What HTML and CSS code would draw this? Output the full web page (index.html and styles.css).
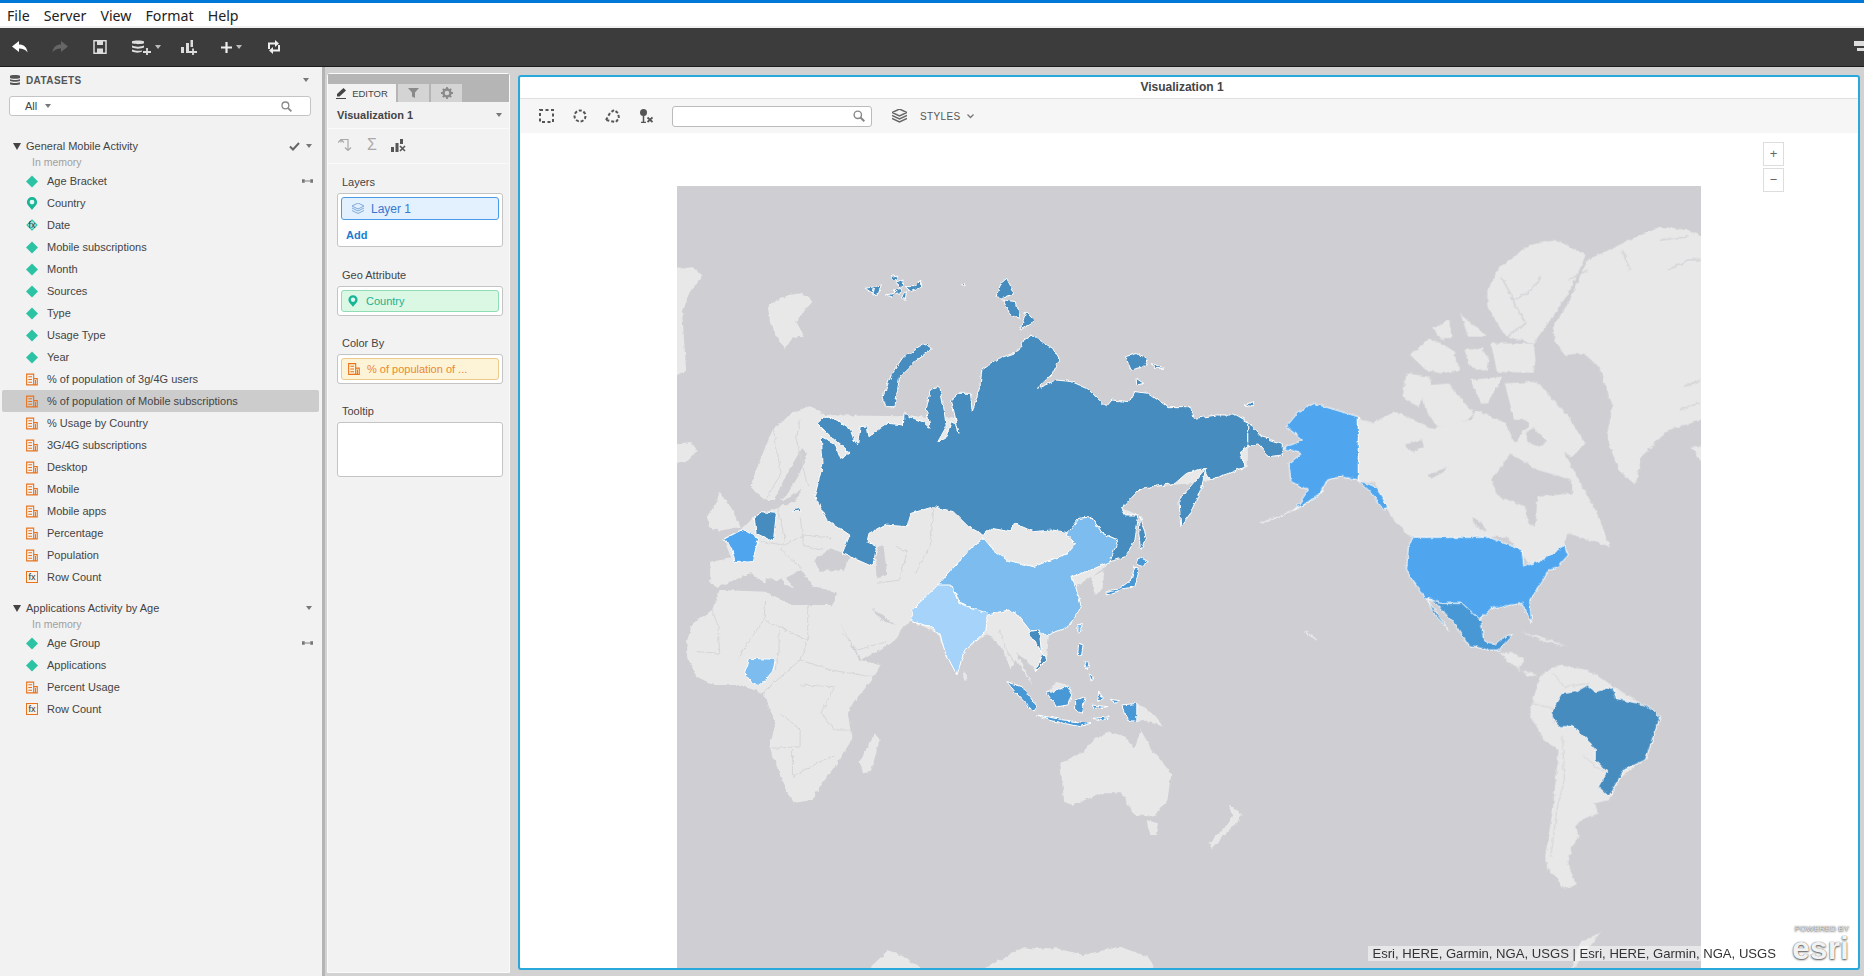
FILE: index.html
```html
<!DOCTYPE html>
<html>
  <head>
    <title>Visualization 1</title>
    <link rel="stylesheet" href="styles.css">
  </head>
  <body>
    <svg class="defs" width="0" height="0">
      <symbol id="i-attr" viewBox="0 0 12 12"><path d="M6 0 12 6 6 12 0 6Z" fill="#2cc3a4"/></symbol>
      <symbol id="i-pin" viewBox="0 0 12 14"><path d="M6 0a5.5 5.5 0 0 1 5.5 5.5C11.500 9 8 11 6 14 4 11 .5 9 .5 5.500A5.500 5.500 0 0 1 6 0Z" fill="#18b596"/><circle cx="6" cy="5.500" r="2.600" fill="#e6f7f2"/></symbol>
      <symbol id="i-measure" viewBox="0 0 13 13"><path d="M.7.7h7.600v11.600H.7ZM8.300 5.500h3.900v6.800H8.300ZM2.500 3.500h4M2.500 6.500h4M2.500 9.500h4M10.200 7v5" fill="none" stroke="#e8731c" stroke-width="1.200"/></symbol>
      <symbol id="i-link" viewBox="0 0 12 6"><path d="M0 1h3v4H0ZM9 1h3v4H9Z" fill="#777"/><path d="M3 3h6" stroke="#777"/></symbol>
      <symbol id="i-search" viewBox="0 0 12 12"><circle cx="4.800" cy="4.800" r="3.700" fill="none" stroke="#888" stroke-width="1.400"/><path d="M7.500 7.500 11.300 11.300" stroke="#888" stroke-width="2"/></symbol>
      <filter id="rough" filterUnits="userSpaceOnUse" x="667" y="176" width="1044" height="802">
        <feTurbulence type="fractalNoise" baseFrequency=".2" numOctaves="2" seed="4"/>
        <feDisplacementMap in="SourceGraphic" scale="4" xChannelSelector="R" yChannelSelector="G"/>
      </filter>
    </svg>

    <div class="menu-bar">
      <span>File</span>
      <span>Server</span>
      <span>View</span>
      <span>Format</span>
      <span>Help</span>
    </div>

    <div class="tool-bar">
      <svg width="16" height="12" viewBox="0 0 16 12"><path d="M7 0 0 5.500 7 11V7.500c4 0 6.500 1 8.500 4C15 6 11.500 3.500 7 3.500Z" fill="#fff"/></svg>
      <svg width="16" height="12" viewBox="0 0 16 12"><path d="M9 0 16 5.500 9 11V7.500c-4 0-6.500 1-8.500 4C1 6 4.500 3.500 9 3.500Z" fill="#666"/></svg>
      <svg width="16" height="14" viewBox="0 0 16 14"><path d="M2 .8h12v12.400H2Z" fill="none" stroke="#ddd" stroke-width="1.500"/><path d="M5 1h6v4H5ZM5 8.500h6V13H5Z" fill="#ddd"/></svg>
      <span class="tool-group">
        <svg width="19" height="15" viewBox="0 0 19 15"><path d="M0 1.500C0 0 12 0 12 1.500V3C12 4.500 0 4.500 0 3ZM0 5.500C3 7 9 7 12 5.500V7.500C9 9 3 9 0 7.500ZM0 9.500C3 11 8 11 10 10.500V11.500C8 13 3 13 0 11.500Z" fill="#ddd"/><path d="M11 12h8M15 8v7" stroke="#ddd" stroke-width="1.800"/></svg>
        <i class="caret caret-light"></i>
      </span>
      <svg class="tool-tight" width="16" height="15" viewBox="0 0 16 15"><path d="M0 7h3v6H0ZM5 3h3v10H5ZM9.500 0h2.500v7H9.500Z" fill="#ddd"/><path d="M8 12h8M12 8.500v6.500" stroke="#ddd" stroke-width="1.800"/></svg>
      <span class="tool-group">
        <svg width="11" height="11" viewBox="0 0 11 11"><path d="M0 5.500h11M5.500 0v11" stroke="#eee" stroke-width="2.200"/></svg>
        <i class="caret caret-light"></i>
      </span>
      <svg width="16" height="14" viewBox="0 0 16 14"><path d="M3 9V3.500h7M13 5v5.500H6" fill="none" stroke="#eee" stroke-width="2"/><path d="M9 0l4 3.500L9 7ZM7 7l-4 3.500L7 14Z" fill="#eee"/></svg>
      <svg class="tool-end" width="10" height="12" viewBox="0 0 10 12"><path d="M0 0h10v5H0ZM3 7h7v3H3Z" fill="#ddd"/></svg>
    </div>

    <div class="main">
      <div class="data-panel">
        <div class="data-head">
          <svg width="10" height="10" viewBox="0 0 10 10"><path d="M0 1C0-.3 10-.3 10 1V3C10 4 0 4 0 3ZM0 4.300C2 5.300 8 5.300 10 4.300V6C8 7 2 7 0 6ZM0 7.300C2 8.300 8 8.300 10 7.300V9C10 10.300 0 10.300 0 9Z" fill="#555"/></svg>
          <span class="data-title">DATASETS</span>
          <i class="caret caret-end"></i>
        </div>
        <div class="search-box">
          <span>All</span>
          <i class="caret"></i>
          <svg class="search-icon" width="11" height="11"><use href="#i-search"/></svg>
        </div>

        <div class="group-head">
          <i class="caret-down"></i>
          <span>General Mobile Activity</span>
          <svg class="check" width="11" height="9" viewBox="0 0 11 9"><path d="M1 4.500 4 7.500 10 1" fill="none" stroke="#666" stroke-width="2"/></svg>
          <i class="caret"></i>
        </div>
        <div class="group-note">In memory</div>
        <div class="row"><svg class="ico"><use href="#i-attr"/></svg>Age Bracket<svg class="link" width="11" height="6"><use href="#i-link"/></svg></div>
        <div class="row"><svg class="ico"><use href="#i-pin"/></svg>Country</div>
        <div class="row"><span class="fx-attr"><b>fx</b></span>Date</div>
        <div class="row"><svg class="ico"><use href="#i-attr"/></svg>Mobile subscriptions</div>
        <div class="row"><svg class="ico"><use href="#i-attr"/></svg>Month</div>
        <div class="row"><svg class="ico"><use href="#i-attr"/></svg>Sources</div>
        <div class="row"><svg class="ico"><use href="#i-attr"/></svg>Type</div>
        <div class="row"><svg class="ico"><use href="#i-attr"/></svg>Usage Type</div>
        <div class="row"><svg class="ico"><use href="#i-attr"/></svg>Year</div>
        <div class="row"><svg class="ico"><use href="#i-measure"/></svg>% of population of 3g/4G users</div>
        <div class="row row-selected"><svg class="ico"><use href="#i-measure"/></svg>% of population of Mobile subscriptions</div>
        <div class="row"><svg class="ico"><use href="#i-measure"/></svg>% Usage by Country</div>
        <div class="row"><svg class="ico"><use href="#i-measure"/></svg>3G/4G subscriptions</div>
        <div class="row"><svg class="ico"><use href="#i-measure"/></svg>Desktop</div>
        <div class="row"><svg class="ico"><use href="#i-measure"/></svg>Mobile</div>
        <div class="row"><svg class="ico"><use href="#i-measure"/></svg>Mobile apps</div>
        <div class="row"><svg class="ico"><use href="#i-measure"/></svg>Percentage</div>
        <div class="row"><svg class="ico"><use href="#i-measure"/></svg>Population</div>
        <div class="row"><span class="fx-measure">fx</span>Row Count</div>

        <div class="group-head group-second">
          <i class="caret-down"></i>
          <span>Applications Activity by Age</span>
          <i class="caret"></i>
        </div>
        <div class="group-note">In memory</div>
        <div class="row"><svg class="ico"><use href="#i-attr"/></svg>Age Group<svg class="link" width="11" height="6"><use href="#i-link"/></svg></div>
        <div class="row"><svg class="ico"><use href="#i-attr"/></svg>Applications</div>
        <div class="row"><svg class="ico"><use href="#i-measure"/></svg>Percent Usage</div>
        <div class="row"><span class="fx-measure">fx</span>Row Count</div>
      </div>

      <div class="editor">
        <div class="tabs">
          <div class="tab tab-active">
            <svg width="11" height="11" viewBox="0 0 11 11"><path d="M7.500 0 10 2.500 3.500 8.500H1V6ZM0 10h10v1H0Z" fill="#444"/></svg>
            EDITOR
          </div>
          <div class="tab">
            <svg width="11" height="10" viewBox="0 0 11 10"><path d="M0 0h11L7 4.500V10L4 8.500V4.500Z" fill="#8a8a8a"/></svg>
          </div>
          <div class="tab">
            <svg width="12" height="12" viewBox="0 0 12 12"><circle cx="6" cy="6" r="3.500" fill="none" stroke="#8a8a8a" stroke-width="2.400"/><path d="M6 0v2.500M6 9.500V12M0 6h2.500M9.500 6H12M1.800 1.800l1.700 1.700M8.500 8.500l1.700 1.700M1.800 10.200l1.700-1.700M8.500 3.500l1.700-1.700" stroke="#8a8a8a" stroke-width="1.800"/></svg>
          </div>
        </div>
        <div class="viz-name">
          <span>Visualization 1</span>
          <i class="caret"></i>
        </div>
        <div class="edit-tools">
          <svg width="14" height="13" viewBox="0 0 14 13"><path d="M3 4V1h7v11M0 4l3-3M3 1l3 3M10 12 7 9M10 12l3-3" fill="none" stroke="#aaa" stroke-width="1.200" transform="translate(0 -.5)"/></svg>
          <span class="sigma">&Sigma;</span>
          <svg width="15" height="13" viewBox="0 0 15 13"><path d="M0 8h3v5H0ZM4.500 4h3v9h-3ZM9 0h3v5H9Z" fill="#555"/><path d="M9 7l5 5M14 7l-5 5" stroke="#555" stroke-width="1.600"/></svg>
        </div>
        <div class="shelves">
          <div class="shelf-label">Layers</div>
          <div class="shelf shelf-layers">
            <div class="pill pill-layer">
              <svg width="12" height="11" viewBox="0 0 12 11"><path d="M6 0 12 3 6 6 0 3ZM0 5 6 8 12 5M0 7.500 6 10.500 12 7.500" fill="none" stroke="#7fa8d8"/></svg>
              Layer 1
            </div>
            <div class="shelf-add">Add</div>
          </div>
          <div class="shelf-label">Geo Attribute</div>
          <div class="shelf">
            <div class="pill pill-geo"><svg width="10" height="12"><use href="#i-pin"/></svg>Country</div>
          </div>
          <div class="shelf-label">Color By</div>
          <div class="shelf">
            <div class="pill pill-color"><svg width="12" height="12"><use href="#i-measure"/></svg>% of population of ...</div>
          </div>
          <div class="shelf-label">Tooltip</div>
          <div class="shelf shelf-empty"></div>
        </div>
      </div>

      <div class="viz">
        <div class="viz-title">Visualization 1</div>
        <div class="viz-tools">
          <svg class="vt-rect" width="15" height="14" viewBox="0 0 15 14"><rect x="1" y="1" width="13" height="12" fill="none" stroke="#555" stroke-width="2" stroke-dasharray="3 2.500"/></svg>
          <svg class="vt-circle" width="14" height="14" viewBox="0 0 14 14"><circle cx="7" cy="7" r="5.500" fill="none" stroke="#555" stroke-width="2" stroke-dasharray="3 1.800"/></svg>
          <svg class="vt-lasso" width="15" height="14" viewBox="0 0 15 14"><path d="M1 11 5 4 9 1 13 4 14 9 11 13 5 12Z" fill="none" stroke="#555" stroke-width="2" stroke-dasharray="3 2"/></svg>
          <svg class="vt-pin" width="14" height="14" viewBox="0 0 14 14"><circle cx="4.500" cy="3.500" r="3.500" fill="#555"/><path d="M4.500 6v8M2 13.500h5" stroke="#555" stroke-width="1.500"/><path d="M8.500 8.500l5 4.500M13.500 8.500l-5 4.500" stroke="#555" stroke-width="1.800"/></svg>
          <div class="viz-search"><svg width="12" height="12"><use href="#i-search"/></svg></div>
          <svg class="vt-layers" width="15" height="14" viewBox="0 0 15 14"><path d="M7.500 0 15 3.500 7.500 7 0 3.500ZM0 6.500 7.500 10 15 6.500M0 9.500 7.500 13 15 9.500" fill="none" stroke="#666" stroke-width="1.400"/></svg>
          <span class="styles-link">STYLES</span>
          <svg width="7" height="5" viewBox="0 0 7 5"><path d="M.5.5 3.500 3.500 6.500.5" fill="none" stroke="#777" stroke-width="1.300"/></svg>
        </div>
        <div class="viz-canvas">
          <svg class="map" width="1024" height="782" viewBox="677 186 1024 782">
            <rect class="sea" x="677" y="186" width="1024" height="782"/>

            <g filter="url(#rough)">
            <g transform="translate(670 180) scale(.38265 .33333)">
              <polygon class="land" points="-20,270 60,262 85,290 50,340 32,400 42,570 -20,610"/>
              <polygon class="land" points="-20,800 55,785 72,812 40,850 -20,845"/>
              <polygon class="land" points="255,375 310,345 345,340 375,362 345,400 330,425 352,472 322,470 300,508 280,470 262,430"/>
              <polygon class="land" points="97,1040 115,985 130,935 155,975 185,1040 130,1052"/>
              <polygon class="land" points="97,1010 110,985 118,1010 100,1030"/>
              <polygon class="land" points="210,920 228,860 270,745 320,700 365,675 405,705 1510,725 1510,860 1400,905 1230,925 1180,985 1225,1005 1190,1130 1150,1145 1105,1190 1135,1170 1130,1230 1110,1245 1100,1190 1060,1220 1075,1280 1040,1340 990,1365 985,1440 955,1475 930,1440 905,1420 950,1520 905,1440 890,1470 870,1410 830,1360 770,1410 750,1485 720,1420 700,1360 630,1325 610,1340 585,1385 500,1440 420,1280 440,1240 370,1215 345,1170 300,1195 250,1210 210,1180 125,1222 105,1210 105,1145 160,1135 140,1075 190,1045 220,1010 280,985 330,960 345,925 385,905 340,930 300,960 250,960"/>
              <polygon class="sea" points="305,880 345,805 358,820 340,880 300,955 272,965"/>
              <polygon class="sea" points="378,1140 420,1105 470,1130 455,1170 390,1172"/>
              <polygon class="sea" points="535,1110 558,1098 568,1185 540,1195"/>
              <polygon class="sea" points="530,1285 590,1335 550,1320"/>
              <polygon class="sea" points="250,1195 300,1210 345,1185 370,1225 250,1232"/>
              <polygon class="land" points="262,1150 285,1155 310,1205 322,1225 300,1215"/>

              <polyline class="border" points="270,745 290,880 250,960"/>
              <polyline class="border" points="340,720 330,780 360,920"/>
              <polyline class="border" points="280,985 300,1070 290,1110 345,1165"/>
              <polyline class="border" points="340,1010 350,1100 400,1110"/>
              <polyline class="border" points="590,1100 620,1115 600,1200 540,1210"/>
              <polyline class="border" points="690,980 680,1100 640,1180"/>
              <polyline class="border" points="235,1085 300,1095 350,1065 420,1075"/>

              <g class="geo geo-dark">
                <polygon points="385,730 405,708 440,722 470,745 480,778 490,795 497,740 515,738 520,770 550,745 570,730 610,735 612,695 625,710 660,725 680,745 670,690 680,630 705,620 715,680 722,740 700,785 720,775 735,725 750,735 755,760 735,660 755,640 785,640 790,695 810,620 815,570 860,535 910,515 925,480 945,465 1000,505 1018,540 1000,580 960,625 1010,600 1050,605 1090,625 1140,680 1155,660 1200,665 1215,635 1250,640 1300,680 1360,680 1370,715 1430,705 1480,705 1510,725 1510,800 1490,815 1503,860 1460,880 1410,900 1395,865 1350,880 1320,910 1290,915 1230,925 1180,985 1190,1005 1225,1005 1215,1080 1190,1130 1150,1145 1150,1110 1170,1080 1130,1060 1100,1010 1070,1015 1050,1060 1000,1050 950,1055 900,1030 890,1055 840,1045 820,1065 780,1040 740,995 690,980 630,1000 620,1040 560,1035 520,1060 515,1085 540,1100 530,1160 450,1120 470,1065 410,1020 378,950 400,850 395,770 430,790 445,835 470,820 425,775"/>
                <polygon points="1510,725 1545,770 1600,790 1600,825 1565,830 1540,795 1510,800"/>
                <polygon points="555,655 580,580 610,530 670,490 685,505 640,545 600,590 588,680 565,680"/>
                <polygon points="1400,865 1330,960 1335,1040 1360,1000 1390,920"/>
                <polygon points="880,295 900,340 870,355 852,350 865,310"/>
                <polygon points="870,360 905,365 915,415 890,405"/>
                <polygon points="930,395 955,425 915,450"/>
                <polygon points="1190,530 1220,520 1250,540 1240,560 1205,570"/>
                <polygon points="1260,550 1290,565 1265,565"/>
                <polygon points="1218,595 1238,610 1220,615"/>
                <polygon points="1500,675 1525,665 1525,680"/>
                <polygon points="510,325 535,320 530,340"/>
                <polygon points="535,320 552,315 545,340 530,345"/>
                <polygon points="565,345 585,340 580,352"/>
                <polygon points="575,290 595,285 590,305"/>
                <polygon points="590,310 610,300 605,325"/>
                <polygon points="585,330 605,325 600,345"/>
                <polygon points="610,340 618,335 615,358 605,355"/>
                <polygon points="615,320 640,320 655,300 655,320 630,335"/>
                <polygon points="760,312 770,310 768,318"/>
                <polygon points="1230,1010 1245,1075 1230,1110 1225,1060"/>
                <polygon points="220,1010 240,995 278,1000 270,1085 225,1060"/>
                <polygon points="320,990 340,985 342,995 320,995"/>
              </g>
              <g class="geo geo-usa">
                <polygon points="140,1078 190,1048 232,1075 215,1145 170,1148 160,1100"/>
              </g>
            </g>

            <g transform="translate(670 570) scale(.38265 .33333)">
              <polygon class="land" points="45,210 60,160 110,120 130,60 250,65 320,105 420,105 495,270 550,285 525,335 480,395 465,430 475,510 430,590 410,620 370,690 320,700 290,620 260,530 275,460 245,370 180,345 115,345 70,320 45,265"/>
              <polygon class="land" points="535,490 548,510 525,605 505,610 495,575"/>
              <polygon class="land" points="768,300 780,330 766,332"/>
              <polygon class="land" points="1020,580 1080,545 1105,510 1150,485 1190,500 1215,535 1230,480 1260,540 1310,610 1300,690 1265,740 1215,735 1180,670 1130,670 1050,705 1030,695"/>
              <polygon class="land" points="1245,750 1275,760 1270,795 1255,795"/>
              <polygon class="land" points="1460,705 1497,735 1470,770 1415,835 1410,820 1450,770 1470,740"/>
              <polygon class="land" points="1220,400 1260,430 1290,470 1235,450 1220,455"/>
              <polygon class="land" points="985,370 1040,345 1010,335"/>
              <polygon class="land" points="490,1230 570,1140 620,1165 692,1230"/>
              <polygon class="land" points="760,1230 920,1135 1010,1135 1080,1155 1175,1130 1250,1160 1280,1230"/>

              <polyline class="border" points="110,120 125,165 130,250 70,245"/>
              <polyline class="border" points="250,90 245,150 205,215 180,265"/>
              <polyline class="border" points="245,150 360,210 360,105"/>
              <polyline class="border" points="360,210 340,270 290,320 240,370"/>
              <polyline class="border" points="285,180 285,240 275,300"/>
              <polyline class="border" points="340,270 420,300 525,320"/>
              <polyline class="border" points="290,430 340,480 340,530 260,535"/>
              <polyline class="border" points="340,345 430,350 395,430 430,480 470,480"/>
              <polyline class="border" points="320,540 320,620 400,570 430,560"/>
              <polyline class="border" points="450,190 490,240 565,215"/>
              <polyline class="border" points="860,180 880,240 905,290"/>

              <g class="geo geo-china">
                <polygon points="720,20 790,-70 820,-95 845,-60 880,-30 950,-10 1040,-50 1060,-80 1035,-105 1070,-155 1100,-160 1130,-110 1170,-90 1150,-25 1100,0 1050,20 1060,50 1075,110 1040,170 990,195 940,180 905,130 885,120 830,135 755,95 745,65 700,45"/>
                <polygon points="195,310 205,265 275,268 270,300 240,345 215,340"/>
              </g>
              <polygon class="geo geo-india" points="632,120 700,45 735,45 755,100 830,130 825,185 770,240 750,315 720,250 705,190 680,170 632,155"/>
              <g class="geo geo-mid">
                <polygon points="1140,75 1190,55 1215,50 1225,5 1215,-10 1205,30 1175,55 1140,65"/>
                <polygon points="1225,-40 1250,-25 1230,-10 1218,-20"/>
                <polygon points="985,370 1040,348 1050,370 1040,405 1010,410"/>
                <polygon points="880,335 920,350 960,410 950,425 905,370"/>
                <polygon points="960,435 1030,450 1100,460 1070,470 990,450"/>
                <polygon points="1060,390 1085,380 1075,430 1060,420"/>
                <polygon points="1180,405 1220,400 1220,455 1195,450"/>
                <polygon points="1150,388 1175,392 1165,400"/>
                <polygon points="1068,220 1080,225 1075,260 1065,255"/>
                <polygon points="1095,310 1110,325 1100,330"/>
                <polygon points="1082,275 1095,280 1090,300"/>
                <polygon points="1120,365 1130,385 1118,395"/>
                <polygon points="1105,445 1150,440 1130,452"/>
                <polygon points="1100,405 1145,410 1110,415"/>
              </g>
              <g class="geo geo-dark">
                <polygon points="935,185 965,180 970,240 985,270 955,305 975,250 950,210"/>
              </g>
              <polygon class="geo geo-lake" points="1066,165 1078,160 1072,190 1066,188"/>
            </g>

            <g transform="translate(1260 180) scale(.3852 .33333)">
              <polygon class="land" points="255,715 290,730 350,695 380,710 450,745 490,730 550,720 560,690 640,730 660,790 720,700 780,760 840,790 790,820 880,1010 908,1100 800,1060 780,1130 700,1150 640,1070 390,1070 340,1010 300,910 255,900"/>
              <polygon class="sea" points="600,900 650,820 720,870 810,900 810,940 720,950 715,1040 695,1030 690,980 620,950"/>
              <polygon class="sea" points="375,795 420,780 425,800 395,815"/>
              <polygon class="sea" points="435,885 490,860 470,880 445,895"/>
              <polygon class="sea" points="690,760 730,715 760,770 725,800 700,790"/>
              <polygon class="sea" points="550,1010 580,1030 585,1055 560,1040"/>
              <polygon class="land" points="590,330 620,265 700,195 770,180 845,225 835,255 800,340 760,410 722,470 710,490 640,470 610,420 590,380"/>
              <polygon class="land" points="760,440 800,370 850,240 960,180 1040,140 1110,150 1200,200 1200,700 1060,750 990,830 975,915 930,870 900,770 915,680 880,560 840,520 790,525 765,480"/>
              <polygon class="land" points="600,490 710,490 715,540 710,578 615,575"/>
              <polygon class="land" points="370,650 380,580 440,590 445,620 410,680"/>
              <polygon class="land" points="420,640 445,615 490,610 510,640 555,700 540,720 460,740 430,690"/>
              <polygon class="land" points="390,525 440,475 470,490 500,510 520,570 470,580 430,570"/>
              <polygon class="land" points="450,445 490,420 500,470 470,480"/>
              <polygon class="land" points="520,400 570,450 590,470 540,470"/>
              <polygon class="land" points="530,510 575,505 595,540 590,575 545,560"/>
              <polygon class="land" points="545,600 585,595 630,590 590,670 575,670"/>
              <polygon class="land" points="635,610 720,605 800,710 845,790 810,830 760,800 690,720 660,720"/>
              <polygon class="land" points="1120,800 1200,790 1200,845 1145,845"/>

              <polyline class="inlet" points="625,290 660,360 700,335 730,290"/>
              <polyline class="inlet" points="650,350 690,430 640,470"/>
              <polyline class="inlet" points="1060,270 1110,240 1145,240"/>
              <polyline class="inlet" points="1040,180 1110,170"/>
              <polyline class="inlet" points="940,210 960,270"/>
              <polyline class="inlet" points="1100,620 1145,600"/>
              <polyline class="inlet" points="1090,690 1140,670"/>
              <polyline class="inlet" points="800,300 850,270"/>

              <polygon class="land" points="620,1415 660,1420 685,1435 670,1470 720,1485 700,1490 640,1440"/>
              <polygon class="land" points="725,1490 770,1455 850,1470 920,1520 1040,1610 1005,1730 940,1790 905,1860 868,1870 880,1900 840,1915 820,1940 830,1970 810,2000 800,2050 820,2115 790,2125 745,2060 740,2030 760,1890 775,1710 735,1680 700,1600"/>
              <polygon class="land" points="675,1355 740,1375 800,1400 740,1385"/>
              <polygon class="land" points="810,2360 830,2290 885,2255 850,2310 820,2360"/>
              <polyline class="border" points="785,1670 790,1800 770,1890 755,2030"/>
              <polyline class="border" points="705,1570 780,1590 760,1630"/>
              <polyline class="border" points="760,1480 790,1520 855,1510"/>
              <polyline class="border" points="840,1725 870,1760 900,1775"/>

              <g class="geo geo-usa">
                <polygon points="68,740 100,695 140,670 255,710 255,900 210,890 175,900 150,950 90,990 125,930 80,905 75,850 108,820 60,805 110,780"/>
                <polygon points="255,900 300,920 335,985 320,990 290,940"/>
                <polygon points="395,1072 595,1072 680,1110 685,1160 740,1135 790,1095 800,1125 770,1165 750,1170 730,1210 700,1260 705,1330 680,1270 600,1285 570,1320 525,1270 470,1270 430,1255 395,1200 380,1170 385,1100"/>
              </g>
              <g class="geo geo-mid">
                <polygon points="435,1255 470,1270 525,1270 575,1325 580,1380 610,1395 640,1365 655,1365 620,1410 590,1410 540,1395 510,1340 465,1280"/>
                <polygon points="435,1260 490,1350 450,1300"/>
              </g>
              <g class="geo geo-dark">
                <polygon points="755,1600 785,1540 820,1535 850,1515 870,1535 915,1520 925,1555 1000,1575 1040,1610 1000,1740 945,1770 905,1850 878,1820 900,1775 870,1740 870,1705 815,1640 775,1640"/>
              </g>
              <polyline class="coast" points="0,1030 60,1005 120,970 165,930"/>
              <polyline class="coast" points="115,1355 150,1380"/>
            </g>
            </g>
          </svg>

          <div class="zoom-ctrl">
            <span class="zoom-btn">+</span>
            <span class="zoom-btn">&minus;</span>
          </div>
          <div class="attribution">Esri, HERE, Garmin, NGA, USGS | Esri, HERE, Garmin, NGA, USGS</div>
          <div class="esri-logo">
            <span class="esri-small">POWERED BY</span>
            <span class="esri-big">esri</span>
          </div>
        </div>
      </div>
    </div>
  </body>
</html>
```
FILE: styles.css
```css
body {
  font-family: "Liberation Sans", Arial, sans-serif;
  font-size: 11px;
  color: #444;
  margin: 0;
  height: 976px;
  overflow: hidden;
  background-color: #d2d2d2;
  display: flex;
  flex-direction: column;
}

.defs {
  display: block;
  height: 0;
}

.menu-bar {
  display: flex;
  gap: 14px;
  height: 23px;
  padding-left: 7px;
  border-top: 3px solid #0078d7;
  border-bottom: 2px solid #f0f0f0;
  background-color: white;
  font-family: "Noto Sans", sans-serif;
  font-size: 14.2px;
  line-height: 25px;
  color: #222;
}

.tool-bar {
  display: flex;
  align-items: center;
  gap: 24px;
  height: 38px;
  padding-left: 12px;
  background-color: #3c3c3c;
  border-bottom: 1px solid #1c1c1c;
}

.tool-group {
  display: flex;
  align-items: center;
  gap: 4px;
}

.tool-tight {
  margin-left: -4px;
}

.tool-end {
  margin-left: auto;
}

.caret {
  display: inline-block;
  width: 0;
  height: 0;
  border-left: 3.5px solid transparent;
  border-right: 3.5px solid transparent;
  border-top: 4px solid #777;
}

.caret-light {
  border-top-color: #bbb;
}

.caret-end {
  margin-left: auto;
  margin-right: 7px;
}

.caret-down {
  display: inline-block;
  width: 0;
  height: 0;
  border-left: 4px solid transparent;
  border-right: 4px solid transparent;
  border-top: 7px solid #444;
}

.main {
  flex: 1;
  display: flex;
  min-height: 0;
}

/* lista de datasets */
.data-panel {
  width: 322px;
  background-color: #f2f2f2;
  border-right: 3px solid #b4b4b4;
}

.data-head {
  display: flex;
  align-items: center;
  gap: 6px;
  height: 26px;
  padding: 0 6px 0 10px;
}

.data-title {
  font-size: 10px;
  font-weight: bold;
  letter-spacing: .4px;
  color: #555;
}

.search-box {
  display: flex;
  align-items: center;
  gap: 8px;
  height: 18px;
  margin: 3px 11px 0 9px;
  padding-left: 15px;
  background-color: white;
  border: 1px solid #c4c4c4;
  border-radius: 3px;
}

.search-icon {
  margin-left: auto;
  margin-right: 18px;
}

.group-head {
  display: flex;
  align-items: center;
  height: 20px;
  margin-top: 20px;
  padding: 0 10px 0 13px;
}

.group-head span {
  margin-left: 5px;
}

.group-head .caret {
  margin-left: 6px;
}

.group-head .check {
  margin-left: auto;
}

.group-head span + .caret {
  margin-left: auto;
}

.group-second {
  margin-top: 10px;
}

.group-note {
  height: 14px;
  padding-left: 32px;
  line-height: 12px;
  font-size: 10.5px;
  color: #a0a0a0;
}

.row {
  display: flex;
  align-items: center;
  gap: 9px;
  height: 22px;
  width: 287px;
  margin-left: 2px;
  padding: 0 6px 0 24px;
  border-radius: 2px;
}

.row-selected {
  background-color: #cccccc;
}

.ico {
  width: 12px;
  height: 13px;
  flex: none;
}

.link {
  margin-left: auto;
}

.fx-attr,
.fx-measure {
  display: block;
  flex: none;
  width: 12px;
  height: 12px;
  font-size: 9px;
  line-height: 12px;
  text-align: center;
  color: #333;
}

.fx-attr {
  position: relative;
}

.fx-attr::before {
  content: "";
  position: absolute;
  left: 2px;
  top: 2px;
  width: 8px;
  height: 8px;
  background-color: #a9e8d6;
  border: 1px solid #2cc3a4;
  box-sizing: border-box;
  transform: rotate(45deg);
}

.fx-attr b {
  position: relative;
  font-weight: normal;
}

.fx-measure {
  width: 10px;
  height: 10px;
  line-height: 10px;
  border: 1px solid #e8731c;
  background-color: #fdf0e0;
}

/* painel do editor */
.editor {
  width: 181px;
  margin: 6px 8px 3px 2px;
  background-color: #f2f2f2;
  border: 1px solid #fafafa;
  border-radius: 3px 3px 0 0;
}

.tabs {
  display: flex;
  gap: 2px;
  height: 18px;
  padding-top: 10px;
  background-color: #b5b5b5;
}

.tab {
  display: flex;
  align-items: center;
  justify-content: center;
  gap: 5px;
  width: 31px;
  background-color: #d4d4d4;
  font-size: 9.5px;
}

.tab-active {
  width: 68px;
  background-color: #f2f2f2;
}

.viz-name {
  display: flex;
  align-items: center;
  justify-content: space-between;
  height: 26px;
  padding: 0 7px 0 9px;
  border-bottom: 1px solid #fafafa;
  font-weight: bold;
}

.edit-tools {
  display: flex;
  align-items: center;
  height: 32px;
  padding: 0 0 2px 10px;
  border-bottom: 1px solid #fafafa;
}

.sigma {
  margin: 0 14px 0 15px;
  font-size: 16px;
  color: #aaa;
}

.shelves {
  padding: 11px 7px 0 9px;
}

.shelf-label {
  height: 18px;
  padding-left: 5px;
  line-height: 15px;
}

.shelf {
  box-sizing: border-box;
  width: 166px;
  margin-bottom: 20px;
  padding: 3px;
  background-color: white;
  border: 1px solid #c4c4c4;
  border-radius: 3px;
}

.shelf-layers {
  margin-bottom: 21px;
}

.shelf-empty {
  height: 55px;
}

.pill {
  box-sizing: border-box;
  display: flex;
  align-items: center;
  gap: 7px;
  width: 158px;
  height: 22px;
  padding-left: 6px;
  border: 1px solid;
  border-radius: 3px;
}

.pill-layer {
  height: 23px;
  padding-left: 10px;
  background-color: #e3f0fd;
  border-color: #4a9ae8;
  color: #3a77d0;
  font-size: 12px;
}

.shelf-add {
  padding: 9px 0 1px 5px;
  line-height: 13px;
  font-weight: bold;
  color: #1a7ccf;
}

.pill-geo {
  background-color: #dbf8e5;
  border-color: #8fdcb5;
  color: #23b090;
}

.pill-geo svg {
  margin-right: 1px;
}

.pill-color {
  background-color: #fdf3d6;
  border-color: #ecc98c;
  color: #ea8a2f;
}

/* visualizacao */
.viz {
  flex: 1;
  display: flex;
  flex-direction: column;
  margin: 8px 4px 6px 0;
  background-color: white;
  border: 2px solid #29a8dc;
  border-radius: 3px;
}

.viz-title {
  height: 21px;
  padding-right: 14px;
  line-height: 20px;
  text-align: center;
  font-size: 12px;
  font-weight: bold;
  border-bottom: 1px solid #e0e0e0;
}

.viz-tools {
  display: flex;
  align-items: center;
  height: 34px;
  padding-left: 19px;
  background-color: #f6f6f6;
  font-size: 10px;
}

.vt-circle {
  margin-left: 19px;
}

.vt-lasso {
  margin-left: 18px;
}

.vt-pin {
  margin-left: 19px;
}

.viz-search {
  box-sizing: border-box;
  display: flex;
  align-items: center;
  justify-content: flex-end;
  width: 200px;
  height: 21px;
  margin-left: 19px;
  padding-right: 6px;
  background-color: white;
  border: 1px solid #bbb;
  border-radius: 3px;
}

.vt-layers {
  margin-left: 20px;
}

.styles-link {
  margin: 0 7px 0 13px;
  letter-spacing: .35px;
  color: #555;
}

.viz-canvas {
  position: relative;
  flex: 1;
  display: flex;
  justify-content: center;
  align-items: flex-end;
  overflow: hidden;
}

.map {
  display: block;
  flex: none;
}

.map * {
  vector-effect: non-scaling-stroke;
}

.sea {
  fill: #cfcfd3;
}

.land {
  fill: #e8e8e9;
}

.border {
  fill: none;
  stroke: #d6d6d8;
  stroke-width: 1;
}

.inlet {
  fill: none;
  stroke: #d4d4d7;
  stroke-width: 1.5;
}

.coast {
  fill: none;
  stroke: white;
  stroke-width: 1;
}

.geo polygon,
polygon.geo {
  stroke: white;
  stroke-width: 1;
  stroke-linejoin: round;
}

.geo-dark {
  fill: #478cbf;
}

.geo-usa {
  fill: #4fa6ee;
}

.geo-mid {
  fill: #4a98d6;
}

.geo-china {
  fill: #7cbcee;
}

.geo-india {
  fill: #a6d3f9;
}

.geo-lake {
  fill: #7cbcee;
}

.zoom-ctrl {
  position: absolute;
  top: 9px;
  right: 74px;
  display: flex;
  flex-direction: column;
  gap: 2px;
}

.zoom-btn {
  box-sizing: border-box;
  width: 21px;
  height: 24px;
  background-color: white;
  border: 1px solid #ddd;
  text-align: center;
  font-size: 13px;
  line-height: 21px;
  color: #666;
}

.attribution {
  position: absolute;
  right: 78px;
  bottom: 7px;
  height: 15px;
  padding: 0 4px;
  background-color: rgba(255, 255, 255, .5);
  font-size: 13.1px;
  line-height: 15px;
  color: #333;
  white-space: nowrap;
}

.esri-logo {
  position: absolute;
  right: 9px;
  bottom: 6px;
  display: flex;
  flex-direction: column;
  align-items: flex-end;
  gap: 1px;
  color: #f2f2f2;
  text-shadow: 0 1px 2px #555, 0 0 1px #555;
}

.esri-small {
  font-size: 8px;
  line-height: 9px;
}

.esri-big {
  font-size: 32px;
  line-height: 28px;
  font-weight: bold;
}
```
